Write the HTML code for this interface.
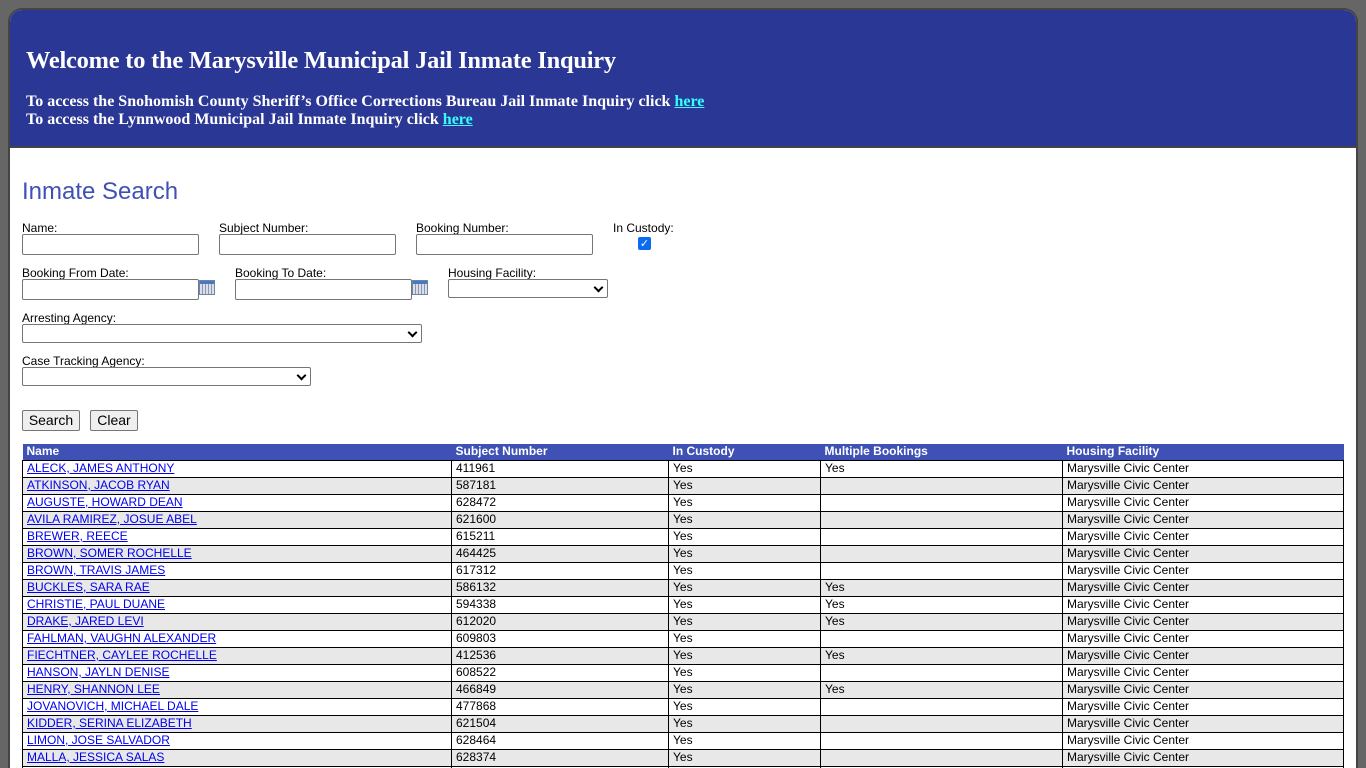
<!DOCTYPE html>
<html><head><meta charset="utf-8"><style>
*{box-sizing:border-box}
html,body{margin:0;padding:0;background:#666;width:1366px;height:768px;overflow:hidden}
#wrap{position:absolute;left:8px;top:8px;width:1350px;height:760px;background:#fff;border:2px solid #444;border-bottom:0;border-radius:14px 14px 0 0;overflow:hidden}
#hdr{position:absolute;left:0;top:0;width:100%;height:138px;background:#2a3794;border-bottom:2px solid #444;color:#fff;font-family:"Liberation Serif",serif;font-weight:bold}
#hdr h1{position:absolute;left:16px;top:37px;margin:0;font-size:24.4px;letter-spacing:-0.2px}
#hdr .l{position:absolute;left:16px;font-size:16px}
#hdr a{color:#3ff;text-decoration:underline}
.sans{font-family:"Liberation Sans",Arial,sans-serif}
.lbl{position:absolute;font:12px "Liberation Sans",Arial,sans-serif;color:#000}
.inp{position:absolute;height:21px;border:1px solid #767676;border-radius:2px;background:#fff}
.sel{position:absolute;height:19px;border:1px solid #767676;border-radius:2px;background:#fff}
.sel:after{content:"";position:absolute;right:5px;top:4px;width:5px;height:5px;border-right:2px solid #000;border-bottom:2px solid #000;transform:rotate(45deg)}
.cal{position:absolute;width:16px;height:15px;background:#9ab;border:1px solid #68a;background-image:linear-gradient(#4a78c0 0 3px,transparent 3px),repeating-linear-gradient(90deg,#dde 0 2px,#89a 2px 3px)}
.btn{position:absolute;height:21px;border:1px solid #767676;border-radius:2px;background:#efefef;font:14px "Liberation Sans",Arial,sans-serif;text-align:center;line-height:19px}
table{position:absolute;left:12px;top:434px;width:1322px;border-collapse:collapse;font:12px "Liberation Sans",Arial,sans-serif}
th{background:#3f51b5;color:#fff;text-align:left;font-weight:bold;height:16px;padding:0 4px;line-height:15px}
td{border:1px solid #000;height:17px;padding:0 4px;line-height:15px}
tr:nth-child(odd) td{background:#e8e8e8}
td a{color:#00e;text-decoration:underline}
</style></head><body>
<div id="wrap">
<div id="hdr">
<h1>Welcome to the Marysville Municipal Jail Inmate Inquiry</h1>
<div class="l" style="top:83px">To access the Snohomish County Sheriff’s Office Corrections Bureau Jail Inmate Inquiry click <a>here</a></div>
<div class="l" style="top:101px">To access the Lynnwood Municipal Jail Inmate Inquiry click <a>here</a></div>
</div>
<div class="sans" style="position:absolute;left:12px;top:168px;font-size:24px;color:#3f51b5">Inmate Search</div>
<div class="lbl" style="left:12px;top:211px">Name:</div>
<div class="lbl" style="left:209px;top:211px">Subject Number:</div>
<div class="lbl" style="left:406px;top:211px">Booking Number:</div>
<div class="lbl" style="left:603px;top:211px">In Custody:</div>
<div class="inp" style="left:12px;top:224px;width:177px"></div>
<div class="inp" style="left:209px;top:224px;width:177px"></div>
<div class="inp" style="left:406px;top:224px;width:177px"></div>
<div style="position:absolute;left:628px;top:227px;width:13px;height:13px;background:#0b6cf0;border-radius:2px;color:#fff;font:bold 11px 'DejaVu Sans',sans-serif;line-height:13px;text-align:center">✓</div>
<div class="lbl" style="left:12px;top:256px">Booking From Date:</div>
<div class="lbl" style="left:225px;top:256px">Booking To Date:</div>
<div class="lbl" style="left:438px;top:256px">Housing Facility:</div>
<div class="inp" style="left:12px;top:269px;width:177px"></div>
<div class="cal" style="left:189px;top:270px"></div>
<div class="inp" style="left:225px;top:269px;width:177px"></div>
<div class="cal" style="left:402px;top:270px"></div>
<div class="sel" style="left:438px;top:269px;width:160px"></div>
<div class="lbl" style="left:12px;top:301px">Arresting Agency:</div>
<div class="sel" style="left:12px;top:314px;width:400px"></div>
<div class="lbl" style="left:12px;top:344px">Case Tracking Agency:</div>
<div class="sel" style="left:12px;top:357px;width:289px"></div>
<div class="btn" style="left:12px;top:400px;width:58px">Search</div>
<div class="btn" style="left:80px;top:400px;width:48px">Clear</div>
<table>
<colgroup><col style="width:429px"><col style="width:217px"><col style="width:152px"><col style="width:242px"><col></colgroup>
<tr><th>Name</th><th>Subject Number</th><th>In Custody</th><th>Multiple Bookings</th><th>Housing Facility</th></tr>
<tr><td><a>ALECK, JAMES ANTHONY</a></td><td>411961</td><td>Yes</td><td>Yes</td><td>Marysville Civic Center</td></tr>
<tr><td><a>ATKINSON, JACOB RYAN</a></td><td>587181</td><td>Yes</td><td></td><td>Marysville Civic Center</td></tr>
<tr><td><a>AUGUSTE, HOWARD DEAN</a></td><td>628472</td><td>Yes</td><td></td><td>Marysville Civic Center</td></tr>
<tr><td><a>AVILA RAMIREZ, JOSUE ABEL</a></td><td>621600</td><td>Yes</td><td></td><td>Marysville Civic Center</td></tr>
<tr><td><a>BREWER, REECE</a></td><td>615211</td><td>Yes</td><td></td><td>Marysville Civic Center</td></tr>
<tr><td><a>BROWN, SOMER ROCHELLE</a></td><td>464425</td><td>Yes</td><td></td><td>Marysville Civic Center</td></tr>
<tr><td><a>BROWN, TRAVIS JAMES</a></td><td>617312</td><td>Yes</td><td></td><td>Marysville Civic Center</td></tr>
<tr><td><a>BUCKLES, SARA RAE</a></td><td>586132</td><td>Yes</td><td>Yes</td><td>Marysville Civic Center</td></tr>
<tr><td><a>CHRISTIE, PAUL DUANE</a></td><td>594338</td><td>Yes</td><td>Yes</td><td>Marysville Civic Center</td></tr>
<tr><td><a>DRAKE, JARED LEVI</a></td><td>612020</td><td>Yes</td><td>Yes</td><td>Marysville Civic Center</td></tr>
<tr><td><a>FAHLMAN, VAUGHN ALEXANDER</a></td><td>609803</td><td>Yes</td><td></td><td>Marysville Civic Center</td></tr>
<tr><td><a>FIECHTNER, CAYLEE ROCHELLE</a></td><td>412536</td><td>Yes</td><td>Yes</td><td>Marysville Civic Center</td></tr>
<tr><td><a>HANSON, JAYLN DENISE</a></td><td>608522</td><td>Yes</td><td></td><td>Marysville Civic Center</td></tr>
<tr><td><a>HENRY, SHANNON LEE</a></td><td>466849</td><td>Yes</td><td>Yes</td><td>Marysville Civic Center</td></tr>
<tr><td><a>JOVANOVICH, MICHAEL DALE</a></td><td>477868</td><td>Yes</td><td></td><td>Marysville Civic Center</td></tr>
<tr><td><a>KIDDER, SERINA ELIZABETH</a></td><td>621504</td><td>Yes</td><td></td><td>Marysville Civic Center</td></tr>
<tr><td><a>LIMON, JOSE SALVADOR</a></td><td>628464</td><td>Yes</td><td></td><td>Marysville Civic Center</td></tr>
<tr><td><a>MALLA, JESSICA SALAS</a></td><td>628374</td><td>Yes</td><td></td><td>Marysville Civic Center</td></tr>
<tr><td><a>MARTIN, JOHN</a></td><td>600000</td><td>Yes</td><td></td><td>Marysville Civic Center</td></tr>
</table>
</div>
</body></html>
